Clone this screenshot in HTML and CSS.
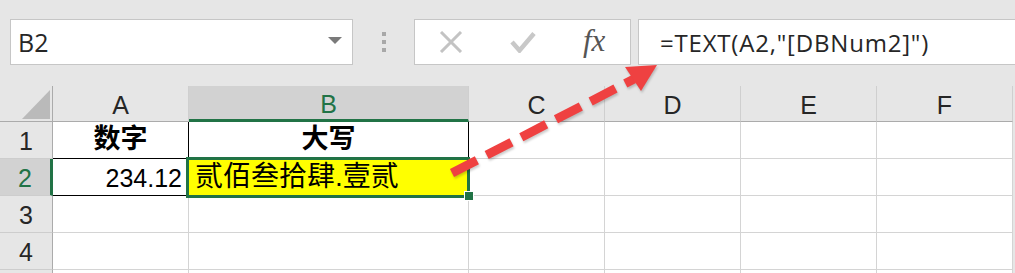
FILE: index.html
```html
<!DOCTYPE html>
<html lang="zh-CN">
<head>
  <meta charset="UTF-8">
  <meta name="viewport" content="width=device-width, initial-scale=1.0">
  <title>TEXT DBNum2</title>
  <link rel="stylesheet" href="styles.css">
</head>
<body>
  <div class="page">
    <!-- Name box + formula bar -->
    <div class="formula-bar">
      <div class="name-box">
        <span class="name">B2</span>
        <span class="caret"></span>
      </div>
      <div class="grip"><i></i><i></i><i></i></div>
      <div class="fx-buttons">
        <span class="slot">
          <svg class="icon" width="24" height="22" viewBox="0 0 24 22">
            <path d="M2 1 L22 21 M22 1 L2 21" stroke="#c3c3c3" stroke-width="3" fill="none"/>
          </svg>
        </span>
        <span class="slot">
          <svg class="icon" width="26" height="22" viewBox="0 0 26 22">
            <path d="M2 11 L9.5 19.5 L24 2.5" stroke="#c8c8c8" stroke-width="4.5" fill="none"/>
          </svg>
        </span>
        <span class="slot"><span class="fx">fx</span></span>
      </div>
      <div class="formula">=TEXT(A2,"[DBNum2]")</div>
    </div>

    <!-- Worksheet grid -->
    <div class="sheet">
      <div class="corner"></div>
      <div class="col-head">A</div>
      <div class="col-head active">B</div>
      <div class="col-head">C</div>
      <div class="col-head">D</div>
      <div class="col-head">E</div>
      <div class="col-head">F</div>

      <div class="row-head">1</div>
      <div class="cell boxed title">数字</div>
      <div class="cell boxed title">大写</div>
      <div class="cell"></div>
      <div class="cell"></div>
      <div class="cell"></div>
      <div class="cell"></div>

      <div class="row-head active">2</div>
      <div class="cell boxed number">234.12</div>
      <div class="cell boxed result">贰佰叁拾肆.壹贰</div>
      <div class="cell"></div>
      <div class="cell"></div>
      <div class="cell"></div>
      <div class="cell"></div>

      <div class="row-head">3</div>
      <div class="cell"></div>
      <div class="cell"></div>
      <div class="cell"></div>
      <div class="cell"></div>
      <div class="cell"></div>
      <div class="cell"></div>

      <div class="row-head">4</div>
      <div class="cell"></div>
      <div class="cell"></div>
      <div class="cell"></div>
      <div class="cell"></div>
      <div class="cell"></div>
      <div class="cell"></div>

      <div class="row-head"></div>
      <div class="cell"></div>
      <div class="cell"></div>
      <div class="cell"></div>
      <div class="cell"></div>
      <div class="cell"></div>
      <div class="cell"></div>
    </div>

    <!-- Red dashed arrow drawn over the sheet -->
    <svg class="arrow" width="1015" height="273" viewBox="0 0 1015 273">
      <path d="M452 173 L634 79" stroke="#ef4141" stroke-width="9" stroke-dasharray="28 11" fill="none"/>
      <polygon points="657,65 625,67 641,91" fill="#ef4141"/>
    </svg>
  </div>
</body>
</html>
```

FILE: styles.css
```css
body {
  margin: 0;
  background-color: #e6e6e6;
  font-family: "Liberation Sans", "Noto Sans CJK SC", sans-serif;
  overflow: hidden;
}

.page {
  position: relative;
  width: 1015px;
  height: 273px;
  overflow: hidden;
}

/* ---- formula bar ---- */
.formula-bar {
  display: flex;
  height: 46px;
  padding: 19px 0 21px 10px;
}

.name-box {
  width: 343px;
  box-sizing: border-box;
  display: flex;
  align-items: center;
  justify-content: space-between;
  padding: 0 10px 0 7px;
  background-color: #fff;
  border: 1px solid #c6c6c6;
}

.name {
  font-family: "Open Sans", sans-serif;
  font-size: 25px;
  color: #262626;
}

.caret {
  width: 0;
  height: 0;
  margin-bottom: 3px;
  border-left: 7px solid transparent;
  border-right: 7px solid transparent;
  border-top: 7px solid #7a7a7a;
}

.grip {
  width: 61px;
  display: flex;
  flex-direction: column;
  align-items: center;
  justify-content: center;
  gap: 4px;
}

.grip i {
  width: 4px;
  height: 4px;
  background-color: #a8a8a8;
}

.fx-buttons {
  width: 217px;
  box-sizing: border-box;
  display: flex;
  background-color: #fff;
  border: 1px solid #c6c6c6;
}

.slot {
  flex: 1;
  display: flex;
  align-items: center;
  justify-content: center;
}

.fx {
  font-family: "Liberation Serif", serif;
  font-style: italic;
  font-size: 31px;
  color: #555;
  margin-bottom: 3px;
}

.formula {
  flex: 1;
  display: flex;
  align-items: center;
  margin-left: 7px;
  padding-left: 21px;
  background-color: #fff;
  border: 1px solid #c6c6c6;
  border-right: none;
  font-family: "Open Sans", sans-serif;
  font-size: 24px;
  letter-spacing: 0.8px;
  color: #262626;
}

/* ---- worksheet ---- */
.sheet {
  display: grid;
  grid-template-columns: 53px 136px 280px 136px 136px 136px 136px;
  grid-template-rows: 36px repeat(5, 37px);
}

.sheet > div {
  box-sizing: border-box;
}

.corner {
  position: relative;
  background-color: #e6e6e6;
  border-right: 1px solid #ababab;
  border-bottom: 1px solid #ababab;
}

.corner::after {
  content: "";
  position: absolute;
  left: 22px;
  top: 4px;
  width: 28px;
  height: 29px;
  background-color: #bababa;
  clip-path: polygon(100% 0, 100% 100%, 0 100%);
}

.col-head {
  display: flex;
  align-items: center;
  justify-content: center;
  padding-top: 3px;
  background-color: #e6e6e6;
  border-right: 1px solid #cfcfcf;
  border-bottom: 1px solid #ababab;
  font-size: 25px;
  color: #262626;
}

.col-head.active {
  background-color: #d2d2d2;
  border-bottom: 3px solid #217346;
  color: #217346;
}

.row-head {
  display: flex;
  align-items: center;
  justify-content: center;
  padding-top: 3px;
  background-color: #e6e6e6;
  border-right: 1px solid #ababab;
  border-bottom: 1px solid #cdcdcd;
  font-size: 25px;
  color: #262626;
}

.row-head.active {
  background-color: #d2d2d2;
  border-right: 3px solid #217346;
  color: #217346;
}

.cell {
  display: flex;
  align-items: flex-end;
  padding: 0 6px 2px;
  background-color: #fff;
  border-right: 1px solid #d4d4d4;
  border-bottom: 1px solid #d4d4d4;
  font-size: 25px;
  color: #000;
  white-space: nowrap;
}

.cell.boxed {
  border-right-color: #000;
  border-bottom-color: #000;
}

.cell.title {
  justify-content: center;
  font-weight: bold;
  font-size: 27px;
}

.cell.number {
  justify-content: flex-end;
}

.cell.result {
  position: relative;
  background-color: #ffff00;
  font-size: 28px;
  padding-bottom: 1px;
}

/* selection frame and fill handle */
.cell.result::after {
  content: "";
  position: absolute;
  left: -3px;
  top: -2px;
  right: -2px;
  bottom: -3px;
  border: 3px solid #217346;
}

.cell.result::before {
  content: "";
  position: absolute;
  right: -6px;
  bottom: -6px;
  width: 8px;
  height: 8px;
  background-color: #217346;
  border: 1px solid #fff;
  z-index: 1;
}

.arrow {
  position: absolute;
  left: 0;
  top: 0;
  pointer-events: none;
  filter: drop-shadow(1px 2px 1px rgba(0, 0, 0, 0.2));
}
```
